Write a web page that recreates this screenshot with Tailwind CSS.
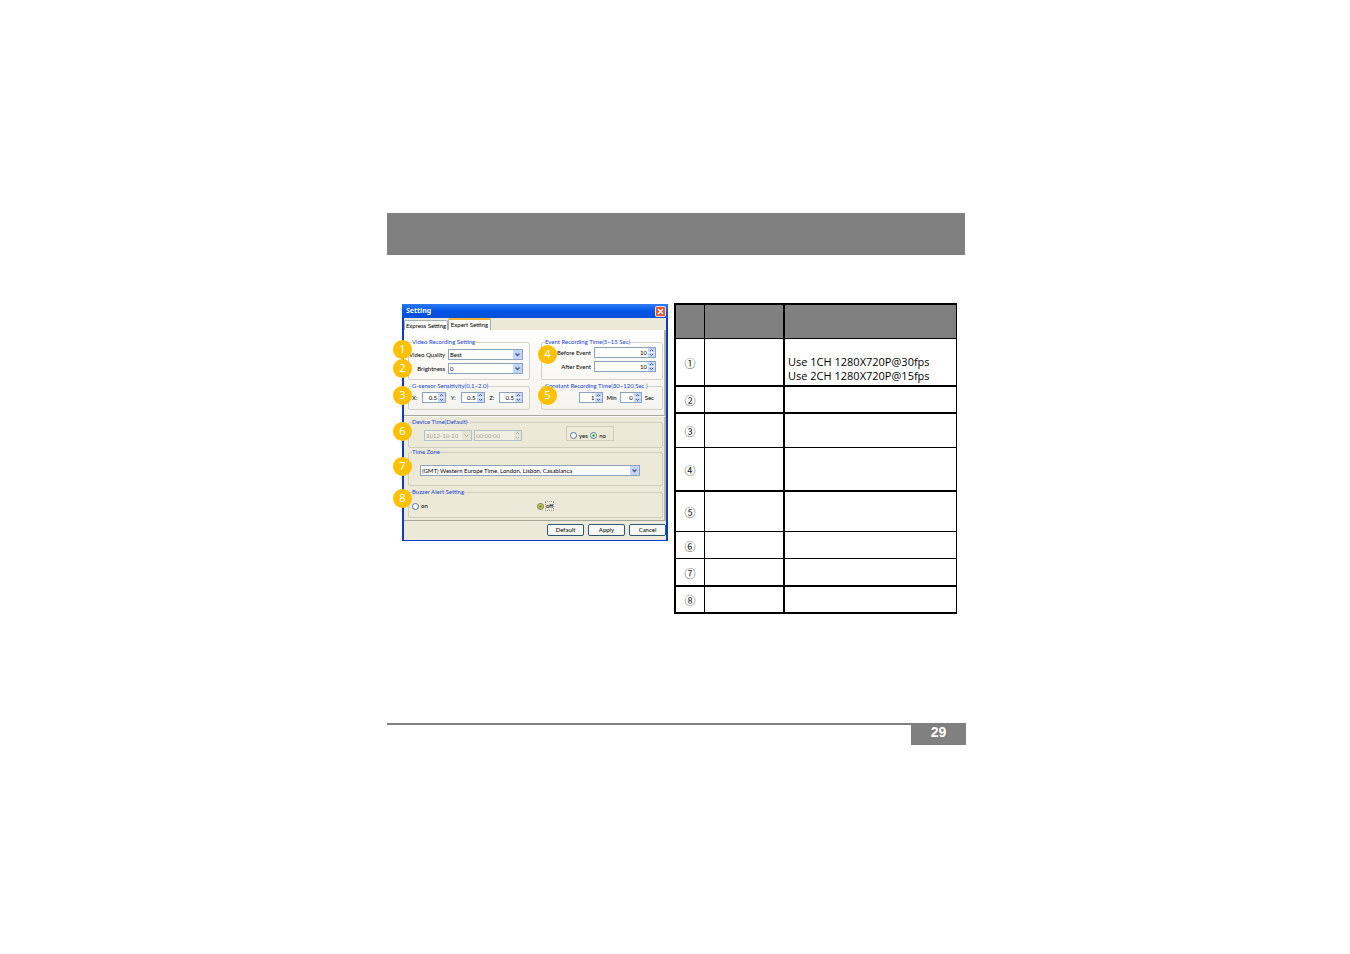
<!DOCTYPE html>
<html lang="en">
<head>
  <meta charset="UTF-8">
  <meta name="viewport" content="width=device-width, initial-scale=1">
  <title>Expert Setting</title>
  <script src="https://cdn.jsdelivr.net/npm/@tailwindcss/browser@4"></script>
</head>
<body class="min-h-screen bg-white pl-[3px] pt-[213px] font-['Open_Sans',sans-serif] text-black">

  <svg class="hidden">
    <symbol id="chevron" viewBox="0 0 9 9">
      <rect width="9" height="9" rx="1" fill="#c3d3fb"/>
      <path d="M2.5 3.5 4.5 5.5 6.5 3.5" fill="none" stroke="#4d6185" stroke-width="1.4"/>
    </symbol>
    <symbol id="spin" viewBox="0 0 7 9">
      <rect width="7" height="4.2" rx="1" fill="#c3d3fb"/>
      <rect y="4.8" width="7" height="4.2" rx="1" fill="#c3d3fb"/>
      <path d="M2 3 3.5 1.5 5 3M2 6 3.5 7.5 5 6" fill="none" stroke="#4d6185"/>
    </symbol>
  </svg>

  <main class="mx-auto w-full max-w-[579px]">
    <header class="mr-px h-[42px] bg-[#808080]"></header>

    <div class="mt-12 flex items-start gap-1.5 pl-[15px] pr-[9px]">

      <!-- Setting window -->
      <section class="relative mt-px w-[266px] shrink-0 border-x-2 border-b border-[#0a3cc8] bg-[#ece9d8] font-['Lato',sans-serif] text-[6px] leading-[8px]">
        <div class="-mx-0.5 flex h-3.5 items-center justify-between bg-linear-to-b from-[#2b7cf5] via-[#0055e5] to-[#0050d8] pl-1 pr-0.5">
          <h1 class="font-['Noto_Sans',sans-serif] text-[7px] font-bold text-white">Setting</h1>
          <button aria-label="Close" class="size-[11px] rounded-xs border border-white/80 bg-[#e0583a]">
            <svg viewBox="0 0 9 9" class="size-[9px]"><path d="M2 2 7 7M7 2 2 7" stroke="#fff" stroke-width="1.4"/></svg>
          </button>
        </div>

        <div class="flex h-3 items-end">
          <button class="h-2.5 w-11 whitespace-nowrap rounded-t-xs border border-b-0 border-[#a5aeb0] bg-[#fbfbf9]">Express Setting</button>
          <button class="h-3 w-[43px] whitespace-nowrap rounded-t-xs border border-t-2 border-b-0 border-[#a5aeb0] border-t-[#f5b335] bg-[#fcfcfb]">Expert Setting</button>
        </div>

        <div class="grid h-[86px] grid-cols-2 content-start gap-x-[11px] gap-y-0.5 border-b border-r-2 border-b-[#a9a797] border-r-[#b5b3a6] bg-linear-to-b from-[#fefefe] to-[#f4f3ee] pl-1 pr-px pt-2">
          <fieldset class="h-[42px] rounded-xs border border-[#d3d2c6]">
            <legend class="ml-[3px] text-[#1746cf]">Video Recording Setting</legend>
            <div class="grid grid-cols-[36px_75px] items-center gap-x-[3px] gap-y-[3px] pt-[3px]">
              <label for="quality" class="whitespace-nowrap text-right">Video Quality</label>
              <div class="grid items-center">
                <select id="quality" class="col-start-1 row-start-1 h-[11px] appearance-none border border-[#8ba3bd] bg-white pl-px leading-[9px]"><option>Best</option></select>
                <svg class="pointer-events-none col-start-1 row-start-1 mr-px size-[9px] justify-self-end"><use href="#chevron"/></svg>
              </div>
              <label for="brightness" class="text-right">Brightness</label>
              <div class="grid items-center">
                <select id="brightness" class="col-start-1 row-start-1 h-[11px] appearance-none border border-[#8ba3bd] bg-white pl-px leading-[9px]"><option>0</option></select>
                <svg class="pointer-events-none col-start-1 row-start-1 mr-px size-[9px] justify-self-end"><use href="#chevron"/></svg>
              </div>
            </div>
          </fieldset>

          <fieldset class="h-[42px] rounded-xs border border-[#d3d2c6]">
            <legend class="ml-[3px] whitespace-nowrap text-[#1746cf]">Event Recording Time(5~15 Sec)</legend>
            <div class="grid grid-cols-[49px_62px] items-center gap-x-[3px] gap-y-[3px] pt-px">
              <label for="before" class="text-right">Before Event</label>
              <div class="flex h-[11px] border border-[#8ba3bd] bg-white">
                <input id="before" value="10" class="w-full min-w-0 pr-px text-right">
                <svg class="h-[9px] w-[7px] shrink-0"><use href="#spin"/></svg>
              </div>
              <label for="after" class="text-right">After Event</label>
              <div class="flex h-[11px] border border-[#8ba3bd] bg-white">
                <input id="after" value="10" class="w-full min-w-0 pr-px text-right">
                <svg class="h-[9px] w-[7px] shrink-0"><use href="#spin"/></svg>
              </div>
            </div>
          </fieldset>

          <fieldset class="h-7 rounded-xs border border-[#d3d2c6]">
            <legend class="ml-[3px] whitespace-nowrap text-[#1746cf]">G-sensor Sensitivity(0.1~2.0)</legend>
            <div class="flex items-center justify-between pl-[3px] pr-1.5 pt-0.5">
              <label for="gx">X:</label>
              <div class="flex h-[11px] w-6 border border-[#8ba3bd] bg-white">
                <input id="gx" value="0.5" class="w-full min-w-0 pr-px text-right">
                <svg class="h-[9px] w-[7px] shrink-0"><use href="#spin"/></svg>
              </div>
              <label for="gy">Y:</label>
              <div class="flex h-[11px] w-6 border border-[#8ba3bd] bg-white">
                <input id="gy" value="0.5" class="w-full min-w-0 pr-px text-right">
                <svg class="h-[9px] w-[7px] shrink-0"><use href="#spin"/></svg>
              </div>
              <label for="gz">Z:</label>
              <div class="flex h-[11px] w-6 border border-[#8ba3bd] bg-white">
                <input id="gz" value="0.5" class="w-full min-w-0 pr-px text-right">
                <svg class="h-[9px] w-[7px] shrink-0"><use href="#spin"/></svg>
              </div>
            </div>
          </fieldset>

          <fieldset class="h-7 rounded-xs border border-[#d3d2c6]">
            <legend class="ml-[3px] whitespace-nowrap text-[#1746cf]">Constant Recording Time(30~120 Sec )</legend>
            <div class="flex items-center justify-end gap-[3px] pr-2 pt-0.5">
              <div class="flex h-[11px] w-6 border border-[#8ba3bd] bg-white">
                <input id="min" value="1" class="w-full min-w-0 pr-px text-right">
                <svg class="h-[9px] w-[7px] shrink-0"><use href="#spin"/></svg>
              </div>
              <label for="min">Min</label>
              <div class="flex h-[11px] w-[22px] border border-[#8ba3bd] bg-white">
                <input id="sec" value="0" class="w-full min-w-0 pr-px text-right">
                <svg class="h-[9px] w-[7px] shrink-0"><use href="#spin"/></svg>
              </div>
              <label for="sec">Sec</label>
            </div>
          </fieldset>
        </div>

        <div class="flex flex-col border-b border-r-2 border-t border-b-[#a9a797] border-r-[#b5b3a6] border-t-[#f8f7f2] pb-0.5 pl-1 pr-px pt-px">
          <fieldset class="h-[30px] rounded-xs border border-[#d0cfbf]">
            <legend class="ml-[3px] text-[#1746cf]">Device Time(Default)</legend>
            <div class="flex items-start pl-[15px]">
              <div class="mt-1 grid w-12 items-center">
                <select aria-label="Date" disabled class="col-start-1 row-start-1 h-[11px] appearance-none border border-[#b3c0c8] bg-[#f1efe4] pl-px leading-[9px] text-[#a3a294] opacity-100"><option>2012-10-20</option></select>
                <svg viewBox="0 0 9 9" class="col-start-1 row-start-1 mr-px size-[9px] justify-self-end"><rect width="9" height="9" fill="#e6e3d5"/><path d="M2.5 3.5 4.5 5.5 6.5 3.5" fill="none" stroke="#b1af9f"/></svg>
              </div>
              <div class="ml-0.5 mt-1 flex h-[11px] w-12 border border-[#b3c0c8] bg-[#f1efe4]">
                <input aria-label="Time" disabled value="00:00:00" class="w-full min-w-0 pl-px text-[#a3a294]">
                <svg viewBox="0 0 7 9" class="h-[9px] w-[7px] shrink-0"><rect width="7" height="9" fill="#e6e3d5"/><path d="M2 3 3.5 1.5 5 3M2 6 3.5 7.5 5 6" fill="none" stroke="#b1af9f"/></svg>
              </div>
              <div class="ml-11 flex h-[15px] w-12 items-center justify-between border border-[#d0cfbf] pl-[3px] pr-[7px] pt-1">
                <label class="flex items-center gap-0.5"><input type="radio" name="device" class="size-[7px] appearance-none rounded-full border border-[#4a769f] bg-white">yes</label>
                <label class="flex items-center gap-0.5"><input type="radio" name="device" checked class="size-[7px] appearance-none rounded-full border border-[#4a769f] bg-white checked:bg-radial checked:from-[#21a121] checked:from-20% checked:to-white checked:to-50%">no</label>
              </div>
            </div>
          </fieldset>

          <fieldset class="h-[38px] rounded-xs border border-[#d0cfbf]">
            <legend class="ml-[3px] text-[#1746cf]">Time Zone</legend>
            <div class="grid items-center pl-[11px] pr-[22px] pt-[9px]">
              <select aria-label="Time Zone" class="col-start-1 row-start-1 h-[11px] appearance-none border border-[#8ba3bd] bg-white pl-px leading-[9px]"><option>(GMT) Western Europe Time, London, Lisbon, Casablanca</option></select>
              <svg class="pointer-events-none col-start-1 row-start-1 mr-px size-[9px] justify-self-end"><use href="#chevron"/></svg>
            </div>
          </fieldset>

          <fieldset class="mt-0.5 h-[30px] rounded-xs border border-[#d0cfbf]">
            <legend class="ml-[3px] text-[#1746cf]">Buzzer Alert Setting</legend>
            <div class="grid grid-cols-2 pl-[3px] pt-1.5">
              <label class="flex items-center gap-0.5"><input type="radio" name="buzzer" class="size-[7px] appearance-none rounded-full border border-[#4a769f] bg-white">on</label>
              <label class="flex items-center gap-0.5"><input type="radio" name="buzzer" checked class="size-[7px] appearance-none rounded-full border border-[#6b8050] bg-[#f3b93a] checked:bg-radial checked:from-[#21a121] checked:from-20% checked:to-[#f3c85a] checked:to-50%"><span class="outline outline-dotted outline-[#999]">off</span></label>
            </div>
          </fieldset>
        </div>

        <div class="flex justify-end gap-1 pb-1 pt-[3px]">
          <button class="h-3 w-[37px] rounded-xs border border-[#2f5679] bg-[#f8f8f5]">Default</button>
          <button class="h-3 w-[37px] rounded-xs border border-[#2f5679] bg-[#f8f8f5]">Apply</button>
          <button class="h-3 w-[37px] rounded-xs border border-[#2f5679] bg-[#f8f8f5]">Cancel</button>
        </div>

        <!-- Callout numbers -->
        <div class="font-['Noto_Sans',sans-serif] text-[11px] leading-[18px] text-white">
          <span class="absolute -left-[11px] top-[36px] size-[19px] rounded-full bg-[#ffc000] text-center">1</span>
          <span class="absolute -left-[11px] top-[55px] size-[19px] rounded-full bg-[#ffc000] text-center">2</span>
          <span class="absolute -left-[11px] top-[82px] size-[19px] rounded-full bg-[#ffc000] text-center">3</span>
          <span class="absolute left-[134px] top-[41px] size-[19px] rounded-full bg-[#ffc000] text-center">4</span>
          <span class="absolute left-[134px] top-[82px] size-[19px] rounded-full bg-[#ffc000] text-center">5</span>
          <span class="absolute -left-[11px] top-[118px] size-[19px] rounded-full bg-[#ffc000] text-center">6</span>
          <span class="absolute -left-[11px] top-[153px] size-[19px] rounded-full bg-[#ffc000] text-center">7</span>
          <span class="absolute -left-[11px] top-[185px] size-[19px] rounded-full bg-[#ffc000] text-center">8</span>
        </div>
      </section>

      <!-- Description table -->
      <table class="min-w-0 flex-1 table-fixed border-separate border-spacing-0 border-l-2 border-t-2 border-black text-[11px] leading-[14px] [&_th]:pt-px [&_th]:font-['Noto_Sans_CJK_KR',sans-serif] [&_th]:font-normal [&_th]:text-[#222]">
        <colgroup>
          <col class="w-[29px]">
          <col class="w-20">
          <col>
        </colgroup>
        <thead>
          <tr class="h-[34px] bg-[#808080]">
            <td class="border-b border-r border-black"></td>
            <td class="border-b border-r-2 border-black"></td>
            <td class="border-b border-r border-black"></td>
          </tr>
        </thead>
        <tbody>
          <tr class="h-12">
            <th scope="row" class="border-b-2 border-r border-black">①</th>
            <td class="border-b-2 border-r-2 border-black"></td>
            <td class="whitespace-nowrap border-b-2 border-r border-black pl-[3px] pt-3.5">Use 1CH 1280X720P@30fps<br>Use 2CH 1280X720P@15fps</td>
          </tr>
          <tr class="h-[27px]">
            <th scope="row" class="border-b-2 border-r border-black">②</th>
            <td class="border-b-2 border-r-2 border-black"></td>
            <td class="border-b-2 border-r border-black"></td>
          </tr>
          <tr class="h-[34px]">
            <th scope="row" class="border-b border-r border-black">③</th>
            <td class="border-b border-r-2 border-black"></td>
            <td class="border-b border-r border-black"></td>
          </tr>
          <tr class="h-11">
            <th scope="row" class="border-b-2 border-r border-black">④</th>
            <td class="border-b-2 border-r-2 border-black"></td>
            <td class="border-b-2 border-r border-black"></td>
          </tr>
          <tr class="h-10">
            <th scope="row" class="border-b border-r border-black">⑤</th>
            <td class="border-b border-r-2 border-black"></td>
            <td class="border-b border-r border-black"></td>
          </tr>
          <tr class="h-[27px]">
            <th scope="row" class="border-b border-r border-black">⑥</th>
            <td class="border-b border-r-2 border-black"></td>
            <td class="border-b border-r border-black"></td>
          </tr>
          <tr class="h-7">
            <th scope="row" class="border-b-2 border-r border-black">⑦</th>
            <td class="border-b-2 border-r-2 border-black"></td>
            <td class="border-b-2 border-r border-black"></td>
          </tr>
          <tr class="h-[27px]">
            <th scope="row" class="border-b-2 border-r border-black">⑧</th>
            <td class="border-b-2 border-r-2 border-black"></td>
            <td class="border-b-2 border-r border-black"></td>
          </tr>
        </tbody>
      </table>
    </div>

    <footer class="mt-[109px] flex justify-end border-t-2 border-[#808080]">
      <span class="h-5 w-[55px] bg-[#808080] text-center font-['Liberation_Sans',sans-serif] text-[14px] font-bold leading-[14px] text-white">29</span>
    </footer>
  </main>

</body>
</html>
